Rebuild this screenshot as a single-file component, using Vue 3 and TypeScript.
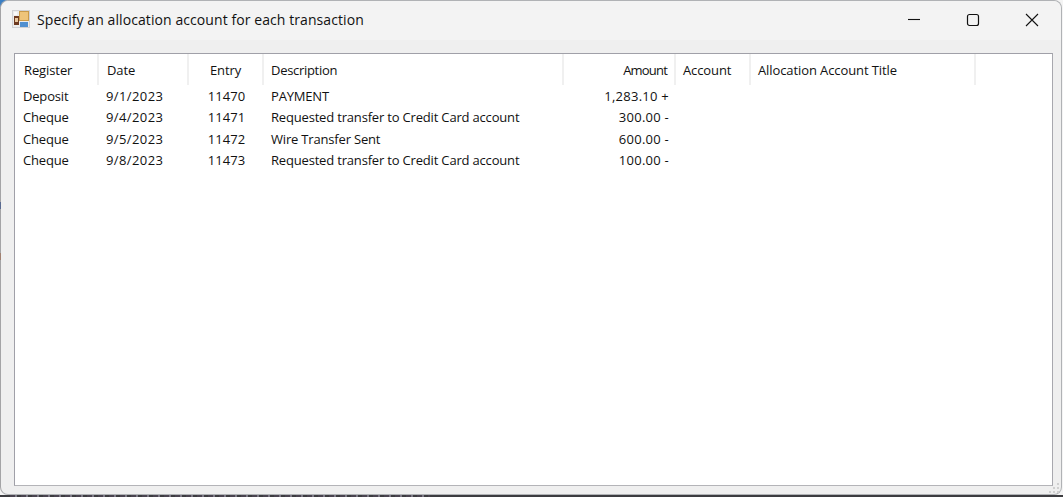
<script setup lang="ts">
interface Column { label: string; width: number; align?: 'left' | 'center' | 'right'; num?: string; head?: string }
const columns: Column[] = [
  { label: 'Register', width: 84 },
  { label: 'Date', width: 90, num: 'date' },
  { label: 'Entry', width: 75, align: 'center', num: 'entry' },
  { label: 'Description', width: 300, head: 'tight' },
  { label: 'Amount', width: 112, align: 'right', num: 'amount', head: 'tighter' },
  { label: 'Account', width: 75 },
  { label: 'Allocation Account Title', width: 225 }
]
const rows = [
  ['Deposit', '9/1/2023', '11470', 'PAYMENT', '1,283.10 +'],
  ['Cheque', '9/4/2023', '11471', 'Requested transfer to Credit Card account', '300.00 -'],
  ['Cheque', '9/5/2023', '11472', 'Wire Transfer Sent', '600.00 -'],
  ['Cheque', '9/8/2023', '11473', 'Requested transfer to Credit Card account', '100.00 -']
]
</script>

<template>
  <div class="desk">
    <div class="window">
      <div class="titlebar">
        <svg class="appicon" width="18" height="18" viewBox="0 0 18 18">
          <rect width="18" height="18" fill="#d0d1d4" />
          <rect x="1" y="1" width="16" height="16" fill="#ececec" />
          <rect x="7" y="1" width="10" height="10" fill="#c99a4a" />
          <rect x="8" y="2" width="8" height="8" fill="#eec47a" />
          <rect x="2" y="6" width="5" height="9" fill="#6e3a20" />
          <rect x="3" y="8" width="3" height="4" fill="#e8c8a0" />
          <rect x="8" y="12" width="8" height="5" fill="#4f8fd0" />
          <rect x="2" y="2" width="3" height="3" fill="#fafafa" />
        </svg>
        <span class="title">Specify an allocation account for each transaction</span>
        <div class="controls">
          <svg width="14" height="14" viewBox="0 0 14 14"><path d="M1 6.5h12" stroke="#111" stroke-width="1.1" fill="none" /></svg>
          <svg width="14" height="14" viewBox="0 0 14 14"><rect x="1.5" y="1.5" width="11" height="11" rx="2" stroke="#111" stroke-width="1.2" fill="none" /></svg>
          <svg width="14" height="14" viewBox="0 0 14 14"><path d="M1 1l12 12M13 1L1 13" stroke="#111" stroke-width="1.1" fill="none" /></svg>
        </div>
      </div>
      <div class="client">
        <div class="list">
          <div class="head">
            <div
              v-for="c in columns"
              :key="c.label"
              class="hcell"
              :class="[c.align, c.head]"
              :style="{ width: c.width + 'px' }"
            >{{ c.label }}</div>
          </div>
          <div v-for="(r, i) in rows" :key="i" class="row">
            <div
              v-for="(v, j) in r"
              :key="j"
              class="cell"
              :class="[columns[j].align, columns[j].num]"
              :style="{ width: columns[j].width + 'px' }"
            >{{ v }}</div>
          </div>
        </div>
        <svg class="grip" width="12" height="12" viewBox="0 0 12 12">
          <g fill="#cfcfcf">
            <rect x="8" y="1" width="2" height="2" />
            <rect x="4" y="5" width="2" height="2" />
            <rect x="8" y="5" width="2" height="2" />
            <rect x="0" y="9" width="2" height="2" />
            <rect x="4" y="9" width="2" height="2" />
            <rect x="8" y="9" width="2" height="2" />
          </g>
        </svg>
      </div>
    </div>
    <i class="edge edge-a"></i>
    <i class="edge edge-b"></i>
  </div>
</template>

<style>
html, body { margin: 0; background: #fff; }
</style>

<style scoped>
.desk {
  position: relative;
  width: 1063px;
  height: 497px;
  overflow: hidden;
  background:
    repeating-linear-gradient(90deg, #4a4450 0 5px, #7d7a86 5px 7px, #3c3c40 7px 11px) 10px 100% / 420px 2px no-repeat,
    linear-gradient(#3c3c40, #3c3c40) 0 100% / 100% 2px no-repeat,
    linear-gradient(#3b7fc4, #3b7fc4) 0 0 / 7px 7px no-repeat,
    #f4f4f4;
  font-family: "Open Sans", "Noto Sans", "Liberation Sans", sans-serif;
}
.window {
  width: 1062px;
  height: 495px;
  display: flex;
  flex-direction: column;
  box-sizing: border-box;
  background: #efefef;
  border: 1px solid #b0b2b5;
  border-left-color: #a4a4a6;
  border-radius: 8px;
}
.edge {
  position: absolute;
  left: 0;
  width: 1px;
  height: 7px;
}
.edge-a { top: 202px; background: #5a6a90; }
.edge-b { top: 253px; background: #a08070; }
.titlebar {
  height: 39px;
  flex: none;
  display: flex;
  align-items: center;
  padding-left: 11px;
  background: #f3f3f3;
  border-radius: 8px 8px 0 0;
}
.appicon { margin-top: -3px; }
.title {
  margin-left: 7px;
  margin-top: -3px;
  font-size: 14px;
  letter-spacing: 0.08px;
  color: #111;
}
.controls {
  margin-left: auto;
  display: flex;
  gap: 45px;
  padding-right: 22px;
  margin-top: -1px;
}
.client {
  flex: 1;
  position: relative;
  padding: 13px 8px 8px 13px;
  display: flex;
}
.list {
  flex: 1;
  box-sizing: border-box;
  background: #fff;
  border: 1px solid #a0a0a8;
  border-bottom-color: #b4b4b8;
  border-right-color: #a8a8ae;
  font-size: 13px;
  letter-spacing: -0.18px;
  color: #111;
}
.head {
  display: flex;
  height: 32px;
  letter-spacing: -0.1px;
}
.hcell {
  box-sizing: border-box;
  height: 31px;
  line-height: 32px;
  padding: 0 7px;
  border-right: 2px solid #f0f0f0;
  white-space: nowrap;
}
.hcell:first-child { padding-left: 9px; }
.hcell:nth-child(2) { padding-left: 8px; }
.tight { letter-spacing: -0.3px; }
.tighter { letter-spacing: -0.8px; }
.row {
  display: flex;
  height: 21.3px;
  line-height: 21.3px;
}
.cell {
  box-sizing: border-box;
  padding: 0 7px;
  white-space: nowrap;
}
.cell:first-child { padding-left: 8px; }
.date { letter-spacing: 0.4px; }
.entry { letter-spacing: 0.05px; }
.amount { letter-spacing: 0.25px; }
.center { text-align: center; }
.right { text-align: right; }
.grip {
  position: absolute;
  right: 0;
  bottom: 0;
}
</style>
